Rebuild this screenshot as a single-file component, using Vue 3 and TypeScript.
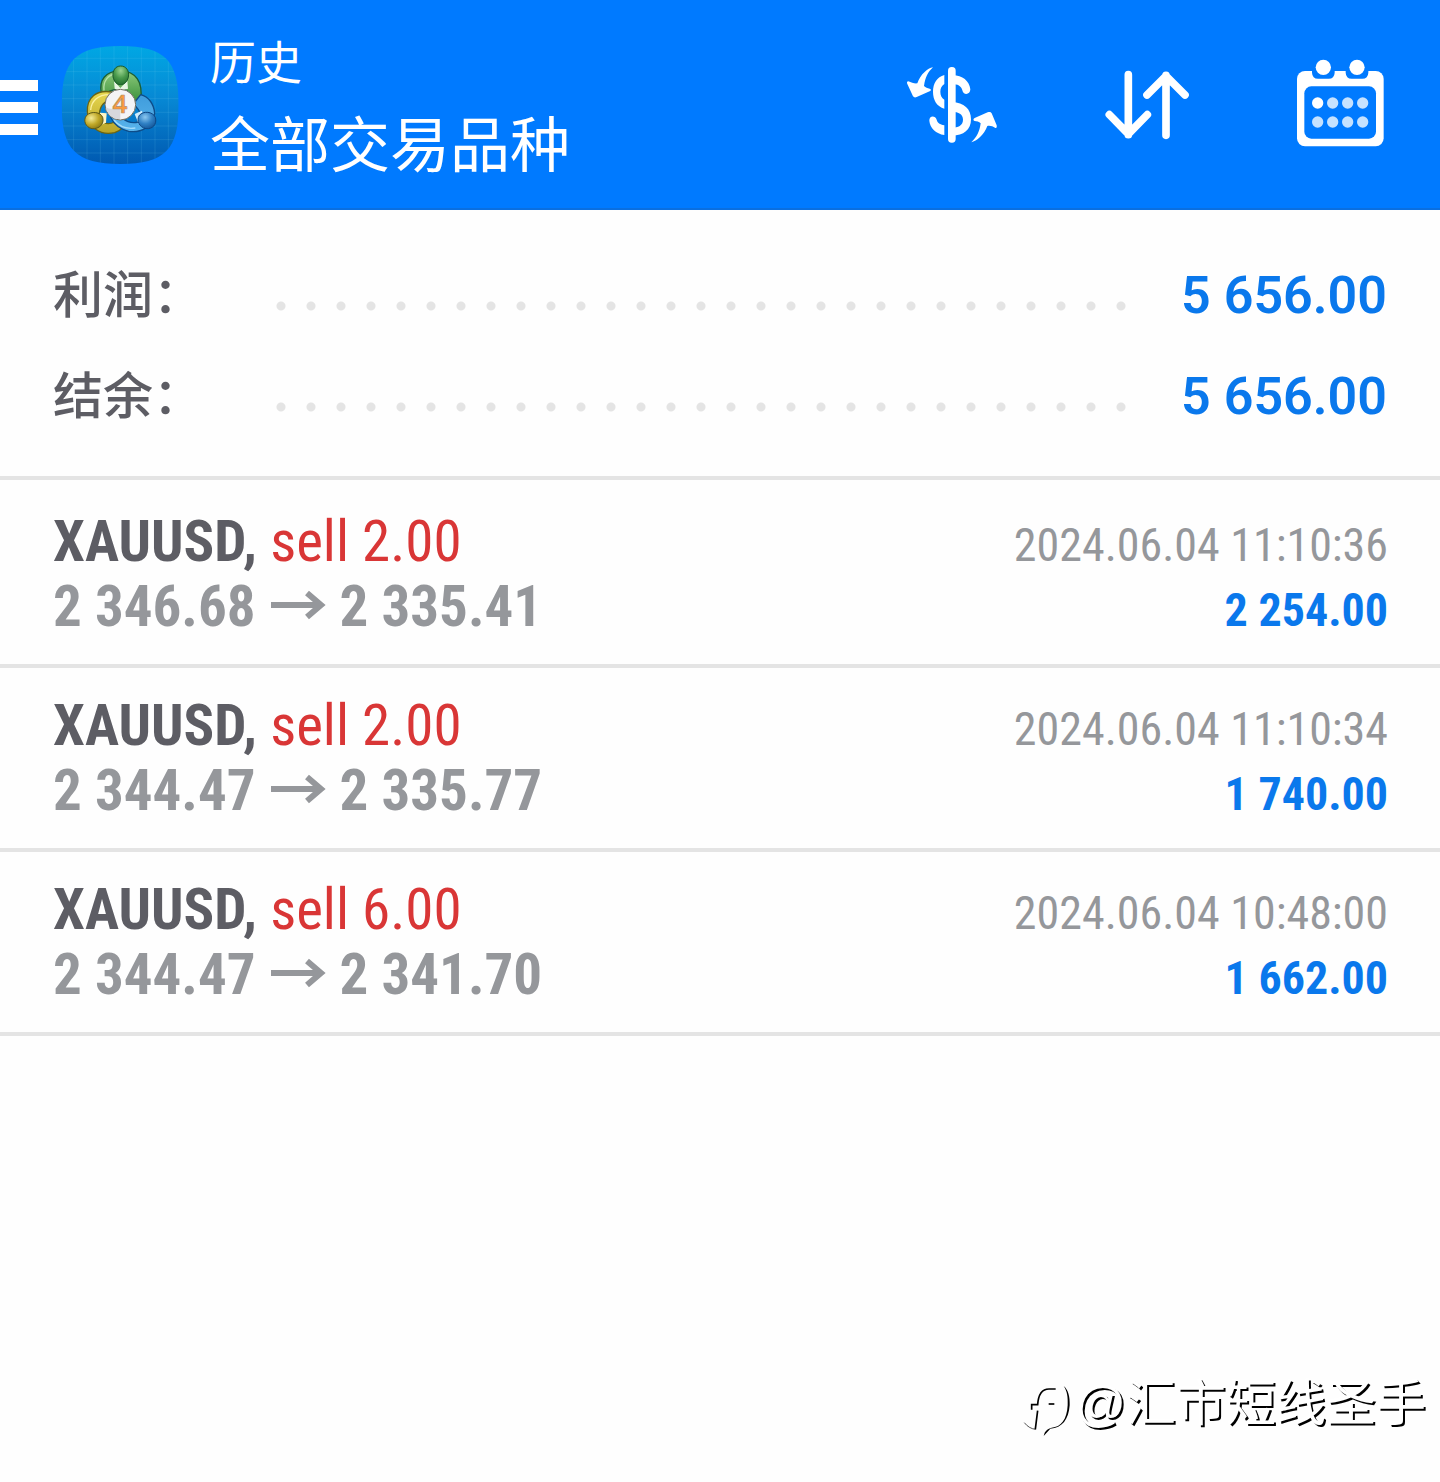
<script setup lang="ts">
interface Summary {
  label: string
  value: string
}

interface Deal {
  symbol: string
  action: string
  open: string
  close: string
  time: string
  profit: string
}

const summary: Summary[] = [
  { label: '利润：', value: '5 656.00' },
  { label: '结余：', value: '5 656.00' },
]

const deals: Deal[] = [
  { symbol: 'XAUUSD,', action: 'sell 2.00', open: '2 346.68', close: '2 335.41', time: '2024.06.04 11:10:36', profit: '2 254.00' },
  { symbol: 'XAUUSD,', action: 'sell 2.00', open: '2 344.47', close: '2 335.77', time: '2024.06.04 11:10:34', profit: '1 740.00' },
  { symbol: 'XAUUSD,', action: 'sell 6.00', open: '2 344.47', close: '2 341.70', time: '2024.06.04 10:48:00', profit: '1 662.00' },
]

const gridLines: number[] = [221, 261, 301, 342, 383, 424, 465, 505]
</script>

<template>
  <div class="page">
    <header class="bar">
      <button class="menu" type="button" aria-label="菜单">
        <span></span><span></span><span></span>
      </button>
      <svg class="logo" viewBox="180 45 360 360" aria-hidden="true">
        <defs>
          <linearGradient id="tile" x1="0" y1="0" x2="0" y2="1">
            <stop offset="0" stop-color="#00a8e4" />
            <stop offset="0.45" stop-color="#0788d4" />
            <stop offset="1" stop-color="#0058b0" />
          </linearGradient>
          <linearGradient id="green" x1="0" y1="0" x2="0" y2="1">
            <stop offset="0" stop-color="#8fca7c" />
            <stop offset="1" stop-color="#2f8a34" />
          </linearGradient>
          <linearGradient id="yellow" x1="0" y1="0" x2="0" y2="1">
            <stop offset="0" stop-color="#e8d850" />
            <stop offset="1" stop-color="#b8a428" />
          </linearGradient>
          <linearGradient id="blue" x1="0" y1="0" x2="0" y2="1">
            <stop offset="0" stop-color="#3f9cdc" />
            <stop offset="1" stop-color="#58b4ec" />
          </linearGradient>
          <radialGradient id="greenHead" cx="0.5" cy="0.25" r="0.8">
            <stop offset="0" stop-color="#9bd490" />
            <stop offset="0.5" stop-color="#4a9a4c" />
            <stop offset="1" stop-color="#1f6a2a" />
          </radialGradient>
          <radialGradient id="yellowHead" cx="0.35" cy="0.35" r="0.8">
            <stop offset="0" stop-color="#f4ec9a" />
            <stop offset="0.5" stop-color="#c0a828" />
            <stop offset="1" stop-color="#7a6a10" />
          </radialGradient>
          <radialGradient id="blueHead" cx="0.4" cy="0.3" r="0.8">
            <stop offset="0" stop-color="#8cc8f0" />
            <stop offset="0.5" stop-color="#2f80c4" />
            <stop offset="1" stop-color="#104e90" />
          </radialGradient>
          <clipPath id="tileClip">
            <path d="M361 48C495 48 536 92 536 225S495 402 361 402S185 358 185 225S227 48 361 48Z" />
          </clipPath>
        </defs>
        <g clip-path="url(#tileClip)">
          <rect x="180" y="45" width="360" height="360" fill="url(#tile)" />
          <g stroke="#7fd4f4" stroke-opacity="0.14" stroke-width="3">
            <line v-for="x in gridLines" :key="'v' + x" :x1="x" y1="45" :x2="x" y2="405" />
            <line v-for="y in gridLines" :key="'h' + y" x1="180" :y1="y - 136" x2="540" :y2="y - 136" />
          </g>
        </g>
        <g stroke-linejoin="round">
          <path d="M304 190C296 150 316 124 361 122C408 124 430 156 422 212L400 226C396 196 388 184 374 178H352C334 180 326 182 318 190Z" fill="url(#green)" stroke="#1c5e34" stroke-width="4" />
          <path d="M312 182C308 152 326 134 346 132" fill="none" stroke="#b4e0a8" stroke-width="4" />
          <path d="M336 186C290 178 260 202 262 246C264 292 300 318 344 308C356 304 362 300 368 292L344 276C318 288 298 276 298 252C300 226 316 212 336 208Z" fill="url(#yellow)" stroke="#6a6414" stroke-width="4" />
          <path d="M272 240C274 212 296 194 326 194" fill="none" stroke="#fbf0a0" stroke-width="4" />
          <path d="M422 194C446 200 462 222 464 250C460 288 424 310 386 304C362 298 342 284 332 262L356 254C372 274 396 282 414 276C430 266 424 244 400 222Z" fill="url(#blue)" stroke="#0e4c88" stroke-width="4" />
          <path d="M342 270C358 290 380 298 406 294" fill="none" stroke="#a4dcfa" stroke-width="4" />
          <path d="M342 152L361 174L382 152L384 176L361 182L344 176Z" fill="#e8f6e4" />
          <path d="M300 248L320 250L318 278L296 288Z" fill="#fff6c4" />
          <path d="M426 242L404 252L416 282L434 280Z" fill="#d0ecfc" />
          <path d="M362 108C378 108 389 122 385 142C381 156 373 164 361 164C349 164 342 154 339 140C337 122 346 108 362 108Z" fill="url(#greenHead)" stroke="#1a5a2c" stroke-width="3" />
          <path d="M260 256C274 242 302 246 308 262C314 282 297 298 276 296C256 292 248 270 260 256Z" fill="url(#yellowHead)" stroke="#5e5a18" stroke-width="3" />
          <path d="M418 256C430 242 458 244 466 262C472 284 457 298 438 296C418 292 408 272 418 256Z" fill="url(#blueHead)" stroke="#0e4684" stroke-width="3" />
          <circle cx="361" cy="224" r="46" fill="#f4f4f6" stroke="#706e60" stroke-width="3" />
          <path d="M318 232Q340 244 361 224V268Q326 268 318 232Z" fill="#d8d8dc" />
          <text class="version" x="360" y="250" text-anchor="middle">4</text>
        </g>
      </svg>
      <div class="titles">
        <p class="section">历史</p>
        <h1>全部交易品种</h1>
      </div>
      <div class="actions">
        <button type="button" aria-label="货币">
          <svg viewBox="42 51 288 288" fill="#fff">
            <path d="M163 105C141 111 129 130 129 155C129 181 141 199 163 206V179C155 174 151 166 151 155C151 145 155 137 163 132Z" />
            <path d="M186 106C216 105 238 122 241 148C241 166 219 166 217 151C214 138 203 132 186 132Z" />
            <path d="M186 186C222 188 243 206 243 238C243 269 221 287 186 287V263C204 263 219 256 219 239C219 222 206 216 186 215Z" />
            <path d="M163 256C149 253 143 249 140 239C136 225 117 226 118 242C120 265 138 281 163 285Z" />
            <rect x="174" y="81" width="23" height="227" rx="11" />
            <path d="M129 82C113 85 92 102 82 130C73 131 64 128 55 124C51 124 50 128 52 132L69 169C72 173 76 173 80 171L119 154C124 151 124 147 119 146C112 145 107 142 102 138C106 112 113 97 129 82Z" />
            <path d="M244 307C260 302 282 286 292 258C300 256 308 259 316 264C320 265 321 261 320 256L305 220C302 215 298 215 293 217L254 234C249 237 249 241 254 243C260 243 267 245 272 250C269 274 260 292 244 307Z" />
          </svg>
        </button>
        <button type="button" aria-label="排序">
          <svg viewBox="24 21 288 288" fill="none" stroke="#fff" stroke-width="23" stroke-linecap="round" stroke-linejoin="round">
            <path d="M115 74V254M58 194L115 252L172 194" />
            <path d="M228 256V76M171 135L228 78L285 135" />
            <path d="M98 232L115 250L132 232ZM211 98L228 80L245 98Z" fill="#fff" stroke-width="8" />
          </svg>
        </button>
        <button type="button" aria-label="日期">
          <svg viewBox="36 51 288 288">
            <rect x="51" y="93" width="260" height="226" rx="24" fill="#fff" />
            <path d="M96 90H164V98Q163 116 146 116H114Q97 116 96 98ZM197 90H265V98Q264 116 247 116H215Q198 116 197 98Z" fill="#007aff" />
            <rect x="73" y="139" width="215" height="157" rx="21" fill="#007aff" />
            <circle cx="130" cy="82" r="23" fill="#fff" />
            <circle cx="231" cy="82" r="23" fill="#fff" />
            <g fill="#c6e2ff">
              <circle cx="113" cy="189" r="17" fill="#fff" />
              <circle cx="158" cy="189" r="17" />
              <circle cx="203" cy="189" r="17" />
              <circle cx="248" cy="189" r="17" />
              <circle cx="113" cy="246" r="17" />
              <circle cx="158" cy="246" r="17" />
              <circle cx="203" cy="246" r="17" />
              <circle cx="248" cy="246" r="17" />
            </g>
          </svg>
        </button>
      </div>
    </header>

    <dl class="summary">
      <div v-for="item in summary" :key="item.label" class="total">
        <dt>{{ item.label }}</dt>
        <dd>{{ item.value }}</dd>
      </div>
    </dl>

    <ul class="deals">
      <li v-for="deal in deals" :key="deal.time">
        <div class="left">
          <p><b class="symbol">{{ deal.symbol }}</b> <span class="action">{{ deal.action }}</span></p>
          <p class="prices">
            <span>{{ deal.open }}</span>
            <svg viewBox="0 0 56 34" aria-label="至">
              <path d="M1 15H51M37 3L51 15L37 27" fill="none" stroke="#95979b" stroke-width="6" />
            </svg>
            <span>{{ deal.close }}</span>
          </p>
        </div>
        <div class="right">
          <time>{{ deal.time }}</time>
          <p class="profit">{{ deal.profit }}</p>
        </div>
      </li>
    </ul>

    <footer class="mark">
      <svg viewBox="36 54 156 180" aria-hidden="true">
        <path d="M62 149V134H80C82 104 94 87 114 87H134" fill="none" stroke="#000" stroke-width="5" />
        <path d="M80 152L73 208" fill="none" stroke="#000" stroke-width="5" />
        <path d="M40 188Q54 206 74 208" fill="none" stroke="#000" stroke-width="2" />
        <path d="M113 132H130" fill="none" stroke="#000" stroke-width="5" />
        <path d="M158 78C172 90 177 110 176 136C173 178 154 204 118 206L98 228L101 218Q108 206 122 203C150 202 168 178 170 136C171 112 169 94 158 78Z" fill="#000" />
      </svg>
      <span>@汇市短线圣手</span>
    </footer>
  </div>
</template>

<style>
body {
  margin: 0;
  background: #fefefe;
}
</style>

<style scoped>
.page {
  display: flex;
  flex-direction: column;
  min-height: 100vh;
  font-family: Roboto, "Noto Sans CJK SC", sans-serif;
  color: #5d5d64;
}

p,
h1,
dl,
dd,
ul {
  margin: 0;
  padding: 0;
}

button {
  padding: 0;
  border: 0;
  background: none;
}

.bar {
  display: flex;
  align-items: center;
  height: 210px;
  padding-right: 52px;
  box-shadow: inset 0 -2px 0 #0a6fe0;
  background: #007aff;
  color: #fff;
}

.menu {
  display: flex;
  flex-direction: column;
  gap: 11px;
  width: 38px;
  margin: 5px 22px 0 0;
}

.menu span {
  height: 11px;
  background: #fff;
}

.logo {
  width: 120px;
  height: 120px;
  margin-right: 30px;
}

.version {
  font-family: "Open Sans", sans-serif;
  font-size: 78px;
  font-weight: 600;
  fill: #fb9a3c;
  stroke: #b09070;
  stroke-width: 2px;
}

.titles {
  padding-top: 4px;
  font-family: "Noto Sans CJK SC", sans-serif;
}

.section {
  font-size: 46px;
  line-height: 68px;
}

h1 {
  font-size: 60px;
  line-height: 96px;
  font-weight: 400;
}

.actions {
  display: flex;
  gap: 98px;
  margin-left: auto;
}

.actions button,
.actions svg {
  display: block;
  width: 96px;
  height: 96px;
}

.summary {
  padding: 35px 53px 29px;
  border-bottom: 4px solid #e4e4e4;
}

.total {
  display: flex;
  align-items: center;
  height: 101px;
}

.total::before {
  content: "";
  order: 1;
  flex: 1;
  height: 10px;
  margin: 20px 44px 0 0;
  background: radial-gradient(circle, #e4e4e4 4px, transparent 5px) 0 0 / 30px 10px;
}

dt {
  width: 213px;
  padding-bottom: 10px;
  font-family: "Noto Sans CJK SC", sans-serif;
  font-size: 50px;
  font-weight: 500;
  line-height: 72px;
}

dd {
  order: 2;
  font-size: 52px;
  font-weight: 600;
  line-height: 72px;
  color: #0a78ec;
}

.deals {
  padding-top: 4px;
  list-style: none;
  font-family: "Roboto Condensed", Roboto, sans-serif;
}

.deals li {
  display: flex;
  justify-content: space-between;
  box-sizing: border-box;
  height: 184px;
  padding: 25px 52px 0 53px;
  border-bottom: 4px solid #e4e4e4;
}

.left {
  font-size: 57px;
  line-height: 65px;
}

.symbol {
  font-weight: 700;
}

.action {
  color: #d93636;
}

.prices {
  display: flex;
  align-items: center;
  gap: 14px;
  font-weight: 700;
  color: #95979b;
}

.prices svg {
  width: 56px;
  height: 34px;
}

.right {
  padding-top: 4px;
  font-size: 46px;
  line-height: 65px;
  text-align: right;
  color: #95979b;
}

.profit {
  font-weight: 700;
  color: #0a78ec;
}

.mark {
  display: flex;
  align-items: flex-start;
  justify-content: flex-end;
  margin-top: auto;
  padding: 0 14px 44px 0;
  font-family: "Liberation Sans", "Noto Sans CJK SC", sans-serif;
  font-size: 50px;
  line-height: 52px;
  color: #fff;
  text-shadow: 2px 2px 0 #000;
}

.mark svg {
  width: 52px;
  height: 60px;
}
</style>
